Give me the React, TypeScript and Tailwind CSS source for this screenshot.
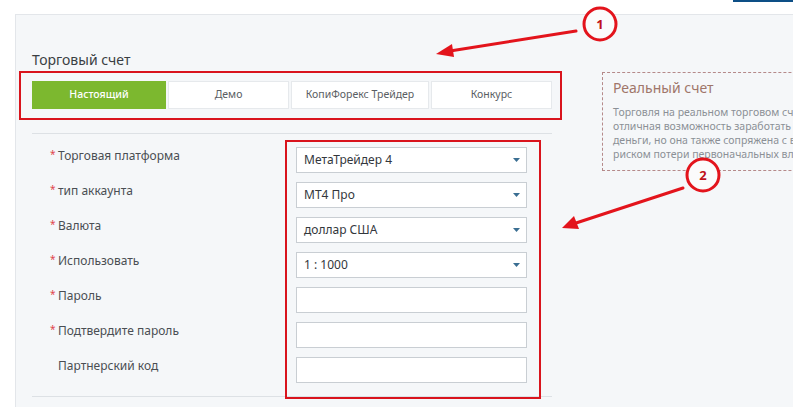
import React from "react";

const rows = [
  { label: "Торговая платформа", req: true, value: "МетаТрейдер 4", select: true },
  { label: "тип аккаунта", req: true, value: "МТ4 Про", select: true },
  { label: "Валюта", req: true, value: "доллар США", select: true },
  { label: "Использовать", req: true, value: "1 : 1000", select: true },
  { label: "Пароль", req: true, value: "", select: false },
  { label: "Подтвердите пароль", req: true, value: "", select: false },
  { label: "Партнерский код", req: false, value: "", select: false },
];

const tabs = [
  { name: "Настоящий", w: "w-[134px]", active: true },
  { name: "Демо", w: "w-[121px]", active: false },
  { name: "КопиФорекс Трейдер", w: "w-[138px]", active: false },
  { name: "Конкурс", w: "w-[121px]", active: false },
];

function Caret() {
  return (
    <svg width="7" height="4" viewBox="0 0 7 4" className="shrink-0">
      <path d="M0 0 H7 L3.5 4 Z" fill="#3a6e92" />
    </svg>
  );
}

export default function App() {
  return (
    <div className="relative w-[793px] h-[407px] overflow-hidden bg-white font-['Noto_Sans',sans-serif] text-[#3b3f44]">
      <div className="h-[14px] flex justify-end">
        <div className="w-[60px] h-[2px] bg-[#0d4f86]" />
      </div>
      <div className="ml-[15px] h-[393px] border-t border-l border-[#e3e6ea] bg-[#f5f7f9] flex">
        {/* left column */}
        <div className="w-[586px] shrink-0 pl-[16px] pt-[35px]">
          <h2 className="text-[14px] leading-[20px] text-[#3a3e43]">Торговый счет</h2>
          <div className="mt-[11px] flex gap-[2px]">
            {tabs.map((t) => (
              <div
                key={t.name}
                className={`${t.w} h-[28px] flex items-center justify-center text-[10.5px] ${
                  t.active
                    ? "bg-[#7cb82f] text-white font-medium"
                    : "bg-white border border-[#e6e9ec] text-[#5a5e63]"
                }`}
              >
                {t.name}
              </div>
            ))}
          </div>
          <div className="mt-[24px] w-[520px] border-b border-[#dde1e5]" />
          <div className="mt-[13px] flex flex-col gap-[9px]">
            {rows.map((r) => (
              <div key={r.label} className="flex items-start">
                <div className="w-[264px] pl-[18px] flex items-start pt-[1px]">
                  <span className="w-[8px] text-[#e0474c] text-[10px] leading-[12px]">{r.req ? "*" : ""}</span>
                  <span className="text-[12px] leading-[16px] text-[#4a4e53]">{r.label}</span>
                </div>
                <div className="w-[231px] h-[26px] bg-white border border-[#c9ced3] flex items-center justify-between pl-[7px] pr-[6px]">
                  <span className="text-[12px] text-[#33373c]">{r.value}</span>
                  {r.select && <Caret />}
                </div>
              </div>
            ))}
          </div>
          <div className="mt-[13px] w-[520px] border-b border-[#dde1e5]" />
        </div>
        {/* right info box */}
        <div className="mt-[57px] w-[260px] h-[99px] shrink-0 border border-dashed border-[#b58a8a] pl-[10px] pt-[5px] overflow-hidden">
          <div className="text-[14px] leading-[20px] text-[#a0766a]">Реальный счет</div>
          <div className="mt-[7px] text-[10.5px] leading-[14px] text-[#8b9096] whitespace-nowrap">
            <div>Торговля на реальном торговом счете –</div>
            <div>отличная возможность заработать реальные</div>
            <div>деньги, но она также сопряжена с высоким</div>
            <div>риском потери первоначальных вложений.</div>
          </div>
        </div>
      </div>

      {/* annotations */}
      <div className="absolute left-[19px] top-[71px] w-[543px] h-[49px] border-2 border-[#d9141d]" />
      <div className="absolute left-[285px] top-[140px] w-[256px] h-[259px] border-2 border-[#d9141d]" />
      <svg className="absolute inset-0 pointer-events-none" width="793" height="407">
        <line x1="576" y1="31" x2="450" y2="51" stroke="#e3141c" strokeWidth="3" strokeLinecap="round" />
        <path d="M436 54 L452 44 L454 57 Z" fill="#e3141c" />
        <circle cx="600" cy="24" r="16" fill="#fbfbfb" stroke="#e3141c" strokeWidth="3" />
        <text x="600" y="29" textAnchor="middle" fontSize="13" fontWeight="700" fill="#c0101a" fontFamily="Noto Sans, sans-serif">1</text>
        <line x1="683" y1="188" x2="576" y2="223" stroke="#e3141c" strokeWidth="3" strokeLinecap="round" />
        <path d="M562 228 L574 216 L579 229 Z" fill="#e3141c" />
        <circle cx="703" cy="175" r="16" fill="#fbfbfb" stroke="#e3141c" strokeWidth="3" />
        <text x="703" y="180" textAnchor="middle" fontSize="13" fontWeight="700" fill="#c0101a" fontFamily="Noto Sans, sans-serif">2</text>
      </svg>
    </div>
  );
}
